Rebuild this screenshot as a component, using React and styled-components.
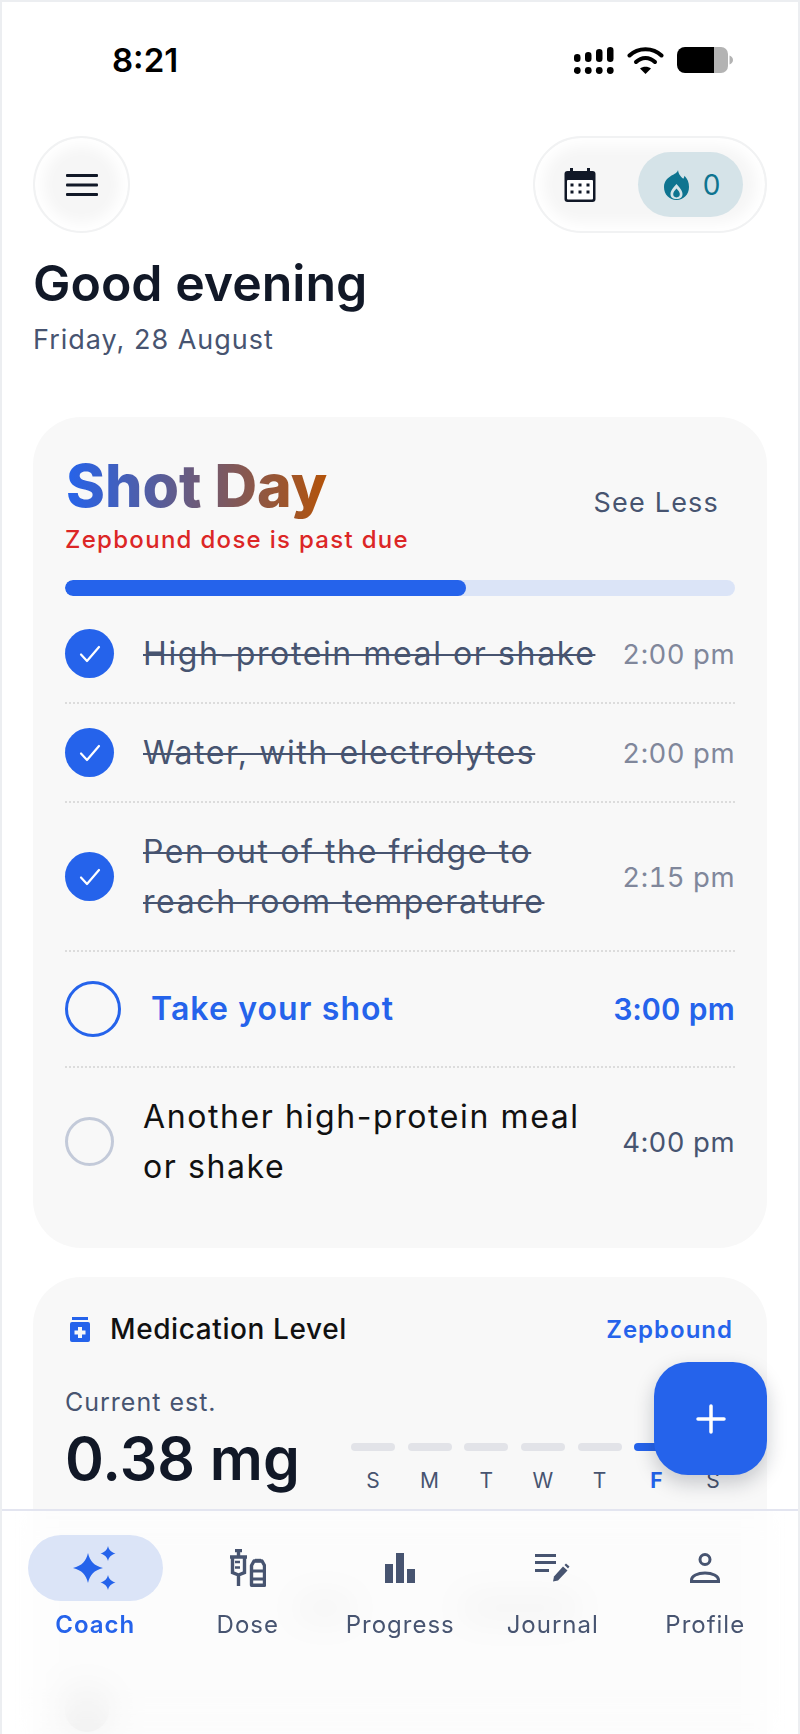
import React from "react";
import styled, { createGlobalStyle } from "styled-components";

const BLUE = "#2563eb";
const SLATE = "#475470";
const INK = "#111827";

const GlobalStyle = createGlobalStyle`
  html, body {
    margin: 0;
    padding: 0;
    background: #fff;
  }
  * {
    box-sizing: border-box;
  }
`;

const Screen = styled.div`
  position: relative;
  width: 800px;
  height: 1734px;
  overflow: hidden;
  background: #fff;
  font-family: Inter, "Noto Sans", sans-serif;
  color: ${INK};
  border: solid #eceef1;
  border-width: 2px 2px 0 2px;
`;

const StatusBar = styled.div`
  display: flex;
  justify-content: space-between;
  align-items: center;
  height: 50px;
  margin-top: 33px;
  padding: 0 65px 0 110px;
`;

const Clock = styled.span`
  font-size: 33px;
  font-weight: 600;
  color: #000;
`;

const StatusIcons = styled.div`
  display: flex;
  align-items: center;
  gap: 13px;
`;

const TopBar = styled.div`
  display: flex;
  justify-content: space-between;
  margin-top: 51px;
  padding: 0 31px;
`;

const softButton = `
  border: 2px solid #f1f2f3;
  background: #f6f6f6;
  box-shadow: inset 0 0 14px 8px #fff;
`;

const MenuButton = styled.div`
  ${softButton}
  display: flex;
  align-items: center;
  justify-content: center;
  width: 97px;
  height: 97px;
  border-radius: 50%;
`;

const ActionPill = styled.div`
  ${softButton}
  display: flex;
  align-items: center;
  justify-content: space-between;
  width: 234px;
  height: 97px;
  border-radius: 49px;
  padding: 0 22px 0 29px;
`;

const StreakBadge = styled.div`
  display: flex;
  align-items: center;
  justify-content: center;
  gap: 14px;
  width: 105px;
  height: 65px;
  padding-left: 3px;
  border-radius: 33px;
  background: #d5e3e8;
  color: #0e7490;
  font-size: 28px;
  font-weight: 400;
`;

const Greeting = styled.div`
  padding: 0 31px;
  margin-top: 22px;
`;

const Title = styled.h1`
  margin: 0;
  font-size: 50px;
  line-height: 56px;
  font-weight: 600;
  color: ${INK};
`;

const DateLine = styled.p`
  margin: 12px 0 0;
  font-size: 27px;
  line-height: 34px;
  letter-spacing: 1px;
  color: ${SLATE};
`;

const Card = styled.section`
  margin: ${(p) => p.$top}px 31px 0;
  padding: ${(p) => p.$pad};
  border-radius: 48px;
  background: #f8f8f8;
`;

const ShotHeader = styled.div`
  display: flex;
  justify-content: space-between;
  align-items: center;
`;

const ShotTitle = styled.h2`
  margin: 0 0 0 1px;
  font-size: 59px;
  line-height: 70px;
  font-weight: 800;
  width: max-content;
  background: linear-gradient(90deg, ${BLUE}, #b45309);
  -webkit-background-clip: text;
  background-clip: text;
  color: transparent;
`;

const PastDue = styled.p`
  margin: 4px 0 0;
  font-size: 24px;
  line-height: 30px;
  letter-spacing: 1.3px;
  font-weight: 500;
  color: #dc2626;
`;

const SeeLess = styled.span`
  font-size: 27px;
  font-weight: 400;
  letter-spacing: 1.2px;
  color: ${SLATE};
  margin: 0 16px 2px 0;
`;

const Track = styled.div`
  height: 16px;
  margin: 25px 0 9px;
  border-radius: 8px;
  background: #dbe4f7;
  overflow: hidden;
`;

const Fill = styled.div`
  height: 100%;
  border-radius: 8px;
  background: ${BLUE};
`;

const Row = styled.div`
  display: flex;
  align-items: center;
  padding: ${(p) => (p.$active ? "29px 0" : "23.5px 0")};
  border-bottom: ${(p) => (p.$last ? "none" : "2px dotted #dcdcdc")};
`;

const Circle = styled.div`
  flex: none;
  display: flex;
  align-items: center;
  justify-content: center;
  width: ${(p) => (p.$active ? 56 : 49)}px;
  height: ${(p) => (p.$active ? 56 : 49)}px;
  border-radius: 50%;
  background: ${(p) => (p.$done ? BLUE : "transparent")};
  border: ${(p) =>
    p.$done ? "none" : p.$active ? `3px solid ${BLUE}` : "3px solid #c3cad9"};
`;

const RowText = styled.div`
  flex: 1;
  margin-left: ${(p) => (p.$active ? 30 : 29)}px;
  font-size: 32px;
  line-height: 50px;
  letter-spacing: ${(p) => (p.$active ? 1.1 : 1.6)}px;
  font-weight: ${(p) => (p.$active ? 600 : 400)};
  color: ${(p) => (p.$done ? SLATE : p.$active ? BLUE : "#111")};
  text-decoration: ${(p) => (p.$done ? "line-through" : "none")};
  text-decoration-thickness: 2px;
`;

const RowTime = styled.div`
  flex: none;
  font-size: ${(p) => (p.$active ? 30 : 27.5)}px;
  letter-spacing: ${(p) => (p.$active ? 0.2 : 0.5)}px;
  font-variant-numeric: tabular-nums;
  font-weight: ${(p) => (p.$active ? 600 : 400)};
  color: ${(p) => (p.$active ? BLUE : p.$done ? "#80879b" : SLATE)};
`;

const MedHeader = styled.div`
  display: flex;
  align-items: center;
  justify-content: space-between;
`;

const MedTitle = styled.div`
  display: flex;
  align-items: center;
  gap: 20px;
  padding-left: 5px;
  font-size: 28px;
  line-height: 34px;
  font-weight: 500;
  letter-spacing: 0.6px;
  color: #111;
`;

const MedLink = styled.span`
  margin-right: 2px;
  font-size: 24px;
  font-weight: 600;
  letter-spacing: 1px;
  color: ${BLUE};
`;

const MedBody = styled.div`
  display: flex;
  align-items: flex-start;
  justify-content: space-between;
  margin-top: 42px;
`;

const Estimate = styled.p`
  margin: 0;
  font-size: 25px;
  line-height: 28px;
  letter-spacing: 1px;
  color: ${SLATE};
`;

const Dosage = styled.div`
  margin-top: 11px;
  font-size: 59px;
  line-height: 64px;
  font-weight: 600;
  color: ${INK};
`;

const Week = styled.div`
  display: grid;
  grid-template-columns: repeat(7, 44px);
  column-gap: 12.7px;
  margin-top: 55px;
`;

const Day = styled.div`
  display: flex;
  flex-direction: column;
  align-items: center;
  gap: 17px;
  font-size: 21px;
  line-height: 26px;
  font-weight: ${(p) => (p.$today ? 700 : 400)};
  color: ${(p) => (p.$today ? BLUE : SLATE)};
`;

const DayBar = styled.div`
  width: 100%;
  height: 8px;
  border-radius: 4px;
  background: ${(p) => (p.$today ? BLUE : "#e2e3e8")};
`;

const Smudges = styled.div`
  display: flex;
  align-items: center;
  justify-content: space-between;
  height: 20px;
  margin-top: 104px;
  padding: 0 155px 0 230px;
`;

const Smudge = styled.div`
  width: ${(p) => p.$w}px;
  height: 20px;
  border-radius: 10px;
  background: #dcdcdc;
`;

const Dot = styled.div`
  width: 44px;
  height: 44px;
  margin-top: 70px;
  border-radius: 50%;
  background: #d8d8d8;
`;

const Fab = styled.button`
  position: absolute;
  left: 652px;
  top: 1360px;
  display: flex;
  align-items: center;
  justify-content: center;
  width: 113px;
  height: 113px;
  padding: 0;
  border: none;
  border-radius: 34px;
  background: ${BLUE};
  box-shadow: 0 8px 20px rgba(15, 23, 42, 0.22);
`;

const Nav = styled.nav`
  position: absolute;
  left: -2px;
  right: -2px;
  bottom: 0;
  height: 225px;
  display: grid;
  grid-template-columns: repeat(5, 152.5px);
  align-content: start;
  padding: 24px 19px 0;
  background: rgba(255, 255, 255, 0.6);
  border-top: 2px solid #e3e5f0;
  backdrop-filter: blur(18px);
`;

const NavItem = styled.div`
  display: flex;
  flex-direction: column;
  align-items: center;
  gap: 9px;
  font-size: 24px;
  line-height: 30px;
  letter-spacing: 1px;
  font-weight: ${(p) => (p.$active ? 600 : 400)};
  color: ${(p) => (p.$active ? BLUE : SLATE)};
`;

const NavIcon = styled.div`
  display: flex;
  align-items: center;
  justify-content: center;
  width: 135px;
  height: 66px;
  border-radius: 33px;
  background: ${(p) => (p.$active ? "#dbe4f7" : "transparent")};
`;

function SignalIcon() {
  const heights = [8, 10, 13, 15];
  return (
    <svg width="40" height="27" viewBox="0 0 40 27" fill="#000">
      {heights.map((h, i) => (
        <g key={i}>
          <rect x={i * 11} y={15 - h} width="6.500" height={h} rx="3.200" />
          <circle cx={i * 11 + 3.25} cy="23.500" r="3.400" />
        </g>
      ))}
    </svg>
  );
}

function WifiIcon() {
  return (
    <svg width="37" height="28" viewBox="0 0 37 28" fill="none" stroke="#000" strokeWidth="4" strokeLinecap="round">
      <path d="M2.500 9.500C11 1 26 1 34.500 9.500" />
      <path d="M9 16c5.500-5.500 13.500-5.500 19 0" />
      <path d="M18.500 28l-5.500-5.500c3-2.500 8-2.500 11 0z" fill="#000" stroke="none" />
    </svg>
  );
}

function BatteryIcon() {
  return (
    <svg width="56" height="26" viewBox="0 0 56 26">
      <path d="M8 0h29v26H8a8 8 0 0 1-8-8V8a8 8 0 0 1 8-8z" fill="#000" />
      <path d="M37 0h7a7 7 0 0 1 7 7v12a7 7 0 0 1-7 7h-7z" fill="#b3b3b3" />
      <path d="M52.500 8.500c2 .6 3.500 2.300 3.500 4.500s-1.500 3.900-3.500 4.500z" fill="#b3b3b3" />
    </svg>
  );
}

function MenuIcon() {
  return (
    <svg width="32" height="22" viewBox="0 0 32 22" fill={INK}>
      <rect width="32" height="3" rx="1" />
      <rect y="9.500" width="32" height="3" rx="1" />
      <rect y="19" width="32" height="3" rx="1" />
    </svg>
  );
}

function CalendarIcon() {
  return (
    <svg width="32" height="34" viewBox="0 0 32 34">
      <rect x="0.500" y="3" width="31" height="31" rx="3" fill={INK} />
      <rect x="6" y="0" width="3" height="6" fill={INK} />
      <rect x="23" y="0" width="3" height="6" fill={INK} />
      <rect x="3" y="12" width="26" height="19.500" rx="1" fill="#fff" />
      {[8, 16, 24].map((x) =>
        [17, 24].map((y) => <rect key={x + "-" + y} x={x - 1.5} y={y - 1.5} width="3" height="3" fill={INK} />)
      )}
    </svg>
  );
}

function FlameIcon() {
  return (
    <svg width="25" height="30" viewBox="0 0 25 30" fill="#0e7490">
      <path
        fillRule="evenodd"
        d="M14 0c.5 4.500 3 6.600 5.300 8.800.7-.9 1-1.800 1.200-3C23.500 8.700 25 12.800 25 17 25 24.500 19.600 30 12.500 30S0 24.500 0 17C0 10.800 4 8 7.500 5.500 10.500 4 13.500 2.800 14 0zM12.500 14C9.500 17.500 6.500 20.500 6.500 24c0 1.500.4 2.700 1.200 3.500C9 28.700 10.700 29 12.500 29s3.500-.3 4.800-1.500c.8-.8 1.200-2 1.200-3.500 0-3.500-3-6.500-6-10z"
      />
      <path d="M12.500 18.500c-1.800 2-3.300 3.800-3.300 5.600a3.300 3.300 0 0 0 6.600 0c0-1.800-1.500-3.600-3.300-5.600z" />
    </svg>
  );
}

function CheckIcon() {
  return (
    <svg width="22" height="18" viewBox="0 0 22 18" fill="none" stroke="#fff" strokeWidth="2.200" strokeLinecap="round" strokeLinejoin="round">
      <path d="M2 9.500l6 6.500L20 2" />
    </svg>
  );
}

function BottleIcon() {
  return (
    <svg width="20" height="25" viewBox="0 0 20 25" fill={BLUE}>
      <rect x="2" y="0" width="16" height="3" />
      <path fillRule="evenodd" d="M2 5h16a2 2 0 0 1 2 2v16a2 2 0 0 1-2 2H2a2 2 0 0 1-2-2V7a2 2 0 0 1 2-2zm6 5v3.500H4.500v4H8V21h4v-3.500h3.500v-4H12V10z" />
    </svg>
  );
}

function PlusIcon() {
  return (
    <svg width="30" height="30" viewBox="0 0 30 30" stroke="#fff" strokeWidth="3.500" strokeLinecap="round">
      <path d="M15 2v26M2 15h26" />
    </svg>
  );
}

function SparkleIcon() {
  return (
    <svg width="44" height="44" viewBox="0 0 44 44" fill={BLUE}>
      <path d="M15 7c2 8.500 6 12.500 15 15-9 2.500-13 6.500-15 15-2-8.500-6-12.500-15-15 9-2.500 13-6.500 15-15z" />
      <path d="M35 0c1 4 3 6.200 7.500 7.500C38 8.800 36 11 35 15c-1-4-3-6.200-7.500-7.500C32 6.200 34 4 35 0z" />
      <path d="M35 29c1 4 3 6.200 7.500 7.500C38 37.800 36 40 35 44c-1-4-3-6.200-7.500-7.500C32 35.200 34 33 35 29z" />
    </svg>
  );
}

function DoseIcon() {
  return (
    <svg width="36" height="38" viewBox="0 0 36 38" fill="none" stroke={SLATE} strokeWidth="3.400">
      <path d="M5 1.500h7M8.500 1.500V7M0 8h17M2.500 8v15.500l6 2.500 6-2.500V8M8.500 26v11" />
      <path d="M5 13h5M5 18.500h5" strokeWidth="2.600" />
      <path d="M25 11.500h6" />
      <path d="M24 12l-2.500 4.500v19.800h13V16.500L32 12z" strokeLinejoin="round" />
      <path d="M21.500 22h13M21.500 30h13" strokeWidth="3" />
    </svg>
  );
}

function BarsIcon() {
  return (
    <svg width="30" height="30" viewBox="0 0 30 30" fill={SLATE}>
      <rect x="0" y="11" width="8" height="19" />
      <rect x="11" y="0" width="8" height="30" />
      <rect x="22" y="16" width="8" height="14" />
    </svg>
  );
}

function JournalIcon() {
  return (
    <svg width="36" height="30" viewBox="0 0 36 30">
      <rect x="0" y="1" width="21" height="3" fill={SLATE} />
      <rect x="0" y="8" width="21" height="3" fill={SLATE} />
      <rect x="0" y="16" width="14" height="3" fill={SLATE} />
      <path d="M18 28.500l1-5 9-10 4.500 4-9.500 10z" fill={SLATE} />
      <path d="M29.500 12l1.500-1.500 3.500 3-1.500 2z" fill={SLATE} />
    </svg>
  );
}

function ProfileIcon() {
  return (
    <svg width="30" height="30" viewBox="0 0 30 30" fill="none" stroke={SLATE} strokeWidth="3">
      <circle cx="15" cy="6.500" r="5" />
      <path d="M1.500 28.500v-1.500c0-4 6-7 13.500-7s13.500 3 13.500 7v1.500z" />
    </svg>
  );
}

const tasks = [
  { label: "High-protein meal or shake", time: "2:00 pm", state: "done" },
  { label: "Water, with electrolytes", time: "2:00 pm", state: "done" },
  { label: "Pen out of the fridge to reach room temperature", time: "2:15 pm", state: "done", wrap: 420 },
  { label: "Take your shot", time: "3:00 pm", state: "active" },
  { label: "Another high-protein meal or shake", time: "4:00 pm", state: "todo", wrap: 450 },
];

const days = ["S", "M", "T", "W", "T", "F", "S"];

const navItems = [
  { label: "Coach", icon: <SparkleIcon />, active: true },
  { label: "Dose", icon: <DoseIcon /> },
  { label: "Progress", icon: <BarsIcon /> },
  { label: "Journal", icon: <JournalIcon /> },
  { label: "Profile", icon: <ProfileIcon /> },
];

export default function App() {
  return (
    <>
      <GlobalStyle />
      <Screen>
        <StatusBar>
          <Clock>8:21</Clock>
          <StatusIcons>
            <SignalIcon />
            <WifiIcon />
            <BatteryIcon />
          </StatusIcons>
        </StatusBar>

        <TopBar>
          <MenuButton>
            <MenuIcon />
          </MenuButton>
          <ActionPill>
            <CalendarIcon />
            <StreakBadge>
              <FlameIcon />0
            </StreakBadge>
          </ActionPill>
        </TopBar>

        <Greeting>
          <Title>Good evening</Title>
          <DateLine>Friday, 28 August</DateLine>
        </Greeting>

        <Card $top={60} $pad="34px 32px 33px">
          <ShotHeader>
            <div>
              <ShotTitle>Shot Day</ShotTitle>
              <PastDue>Zepbound dose is past due</PastDue>
            </div>
            <SeeLess>See Less</SeeLess>
          </ShotHeader>
          <Track>
            <Fill style={{ width: `${(401 / 670) * 100}%` }} />
          </Track>
          {tasks.map((task, i) => {
            const done = task.state === "done";
            const active = task.state === "active";
            return (
              <Row key={task.label} $active={active} $last={i === tasks.length - 1}>
                <Circle $done={done} $active={active}>
                  {done && <CheckIcon />}
                </Circle>
                <RowText $done={done} $active={active}>
                  <span style={task.wrap ? { display: "block", maxWidth: task.wrap } : undefined}>{task.label}</span>
                </RowText>
                <RowTime $done={done} $active={active}>
                  {task.time}
                </RowTime>
              </Row>
            );
          })}
        </Card>

        <Card $top={29} $pad="35px 32px 300px">
          <MedHeader>
            <MedTitle>
              <BottleIcon />
              Medication Level
            </MedTitle>
            <MedLink>Zepbound</MedLink>
          </MedHeader>
          <MedBody>
            <div>
              <Estimate>Current est.</Estimate>
              <Dosage>0.38 mg</Dosage>
            </div>
            <Week>
              {days.map((d, i) => (
                <Day key={i} $today={i === 5}>
                  <DayBar $today={i === 5} />
                  {d}
                </Day>
              ))}
            </Week>
          </MedBody>
          <Smudges>
            <Smudge $w={60} />
            <Smudge $w={120} />
          </Smudges>
          <Dot />
        </Card>

        <Fab aria-label="Add">
          <PlusIcon />
        </Fab>

        <Nav>
          {navItems.map((item) => (
            <NavItem key={item.label} $active={item.active}>
              <NavIcon $active={item.active}>{item.icon}</NavIcon>
              {item.label}
            </NavItem>
          ))}
        </Nav>
      </Screen>
    </>
  );
}
